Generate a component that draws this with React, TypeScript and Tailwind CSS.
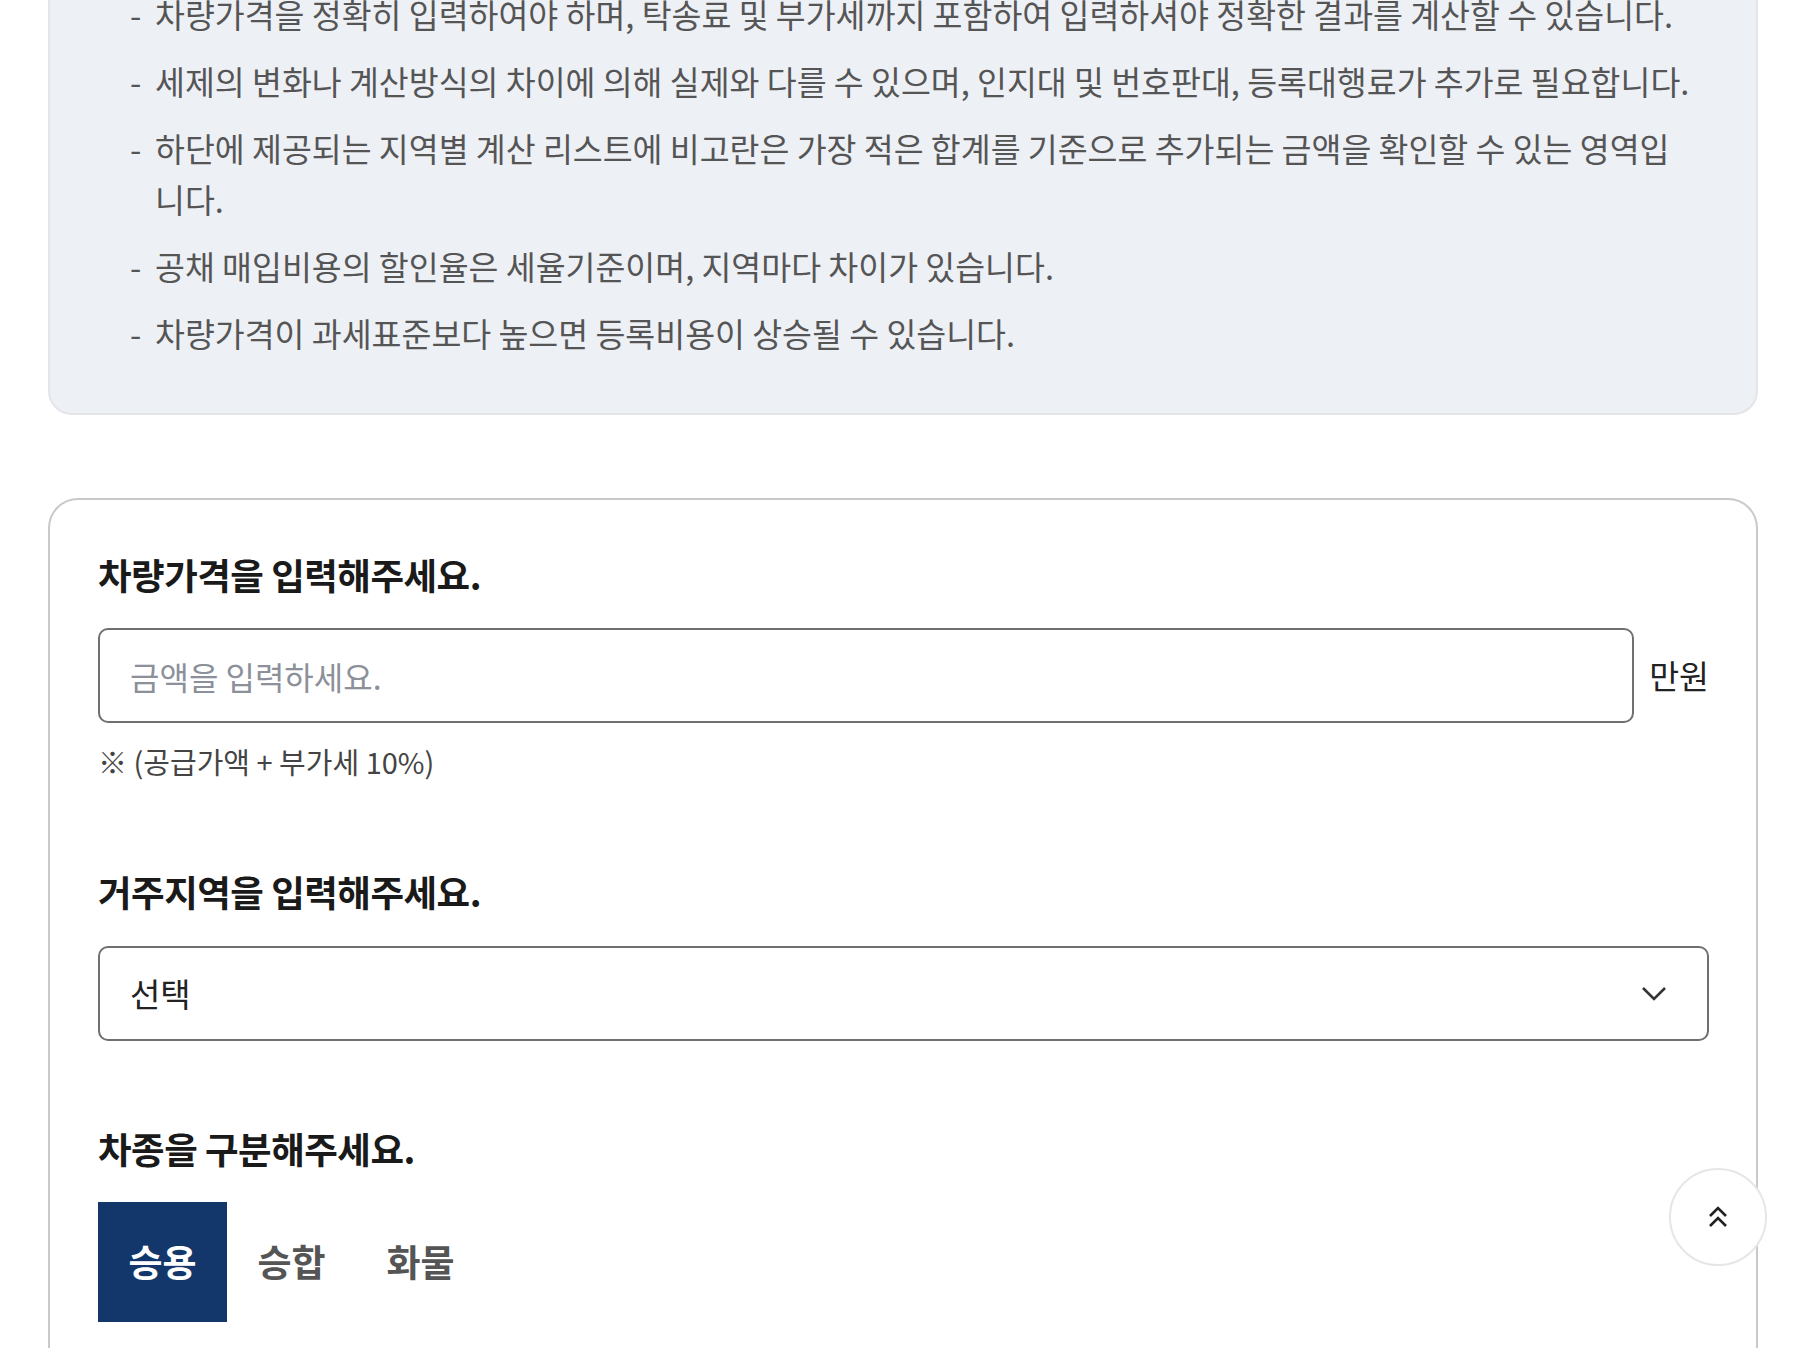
import { useState } from "react";

const notices = [
  "차량가격을 정확히 입력하여야 하며, 탁송료 및 부가세까지 포함하여 입력하셔야 정확한 결과를 계산할 수 있습니다.",
  "세제의 변화나 계산방식의 차이에 의해 실제와 다를 수 있으며, 인지대 및 번호판대, 등록대행료가 추가로 필요합니다.",
  "하단에 제공되는 지역별 계산 리스트에 비고란은 가장 적은 합계를 기준으로 추가되는 금액을 확인할 수 있는 영역입니다.",
  "공채 매입비용의 할인율은 세율기준이며, 지역마다 차이가 있습니다.",
  "차량가격이 과세표준보다 높으면 등록비용이 상승될 수 있습니다.",
];

const carTypes = ["승용", "승합", "화물"];

function SectionTitle({ children }: { children: React.ReactNode }) {
  return (
    <h3 className="text-[36.5px] leading-[46px] font-bold text-[#1a1a1a] tracking-[-0.5px]">
      {children}
    </h3>
  );
}

export default function App() {
  const [carType, setCarType] = useState("승용");

  return (
    <div
      className="h-[1348px] overflow-hidden bg-white"
      style={{ fontFamily: '"Noto Sans CJK KR", "Noto Sans", sans-serif' }}
    >
      <div className="ml-[48px] mr-[50px] mt-[-62px]">
        {/* 안내 문구 */}
        <div className="rounded-[24px] border-2 border-[#e3e5e9] bg-[#edf0f5] pl-[80px] pr-[64px] pt-[48px] pb-[55px]">
          <ul className="flex flex-col gap-[16px]">
            {notices.map((text) => (
              <li key={text} className="flex text-[32.5px] leading-[51px] text-[#555555]">
                <span className="w-[25px] shrink-0">-</span>
                <span>{text}</span>
              </li>
            ))}
          </ul>
        </div>

        {/* 계산 폼 */}
        <div className="mt-[83px] h-[1000px] rounded-[30px] border-2 border-[#c9c9c9] bg-white pl-[48px] pr-[47px] pt-[52px]">
          <SectionTitle>차량가격을 입력해주세요.</SectionTitle>
          <div className="mt-[30px] flex items-center gap-[15px]">
            <input
              type="text"
              placeholder="금액을 입력하세요."
              className="h-[95px] flex-1 rounded-[10px] border-2 border-[#707070] px-[30px] text-[32px] text-[#222] outline-none placeholder:text-[#8b9099]"
            />
            <span className="text-[32.5px] text-[#222]">만원</span>
          </div>
          <p className="mt-[19px] text-[29px] leading-[38px] text-[#444]">※ (공급가액 + 부가세 10%)</p>

          <div className="mt-[89px]">
            <SectionTitle>거주지역을 입력해주세요.</SectionTitle>
          </div>
          <button className="mt-[31px] flex h-[95px] w-full items-center justify-between rounded-[10px] border-2 border-[#707070] pl-[30px] pr-[40px] text-[33px] text-[#222]">
            <span>선택</span>
            <svg width="26" height="16" viewBox="0 0 26 16" fill="none" stroke="#333" strokeWidth="2.6">
              <path d="M2 2l11 11L24 2" />
            </svg>
          </button>

          <div className="mt-[85px]">
            <SectionTitle>차종을 구분해주세요.</SectionTitle>
          </div>
          <div className="mt-[30px] flex">
            {carTypes.map((t) => (
              <button
                key={t}
                onClick={() => setCarType(t)}
                className={
                  t === carType
                    ? "flex h-[120px] w-[129px] items-center justify-center bg-[#13376b] text-[37px] font-bold text-white"
                    : "flex h-[120px] w-[129px] items-center justify-center bg-white text-[37px] font-bold text-[#555]"
                }
              >
                {t}
              </button>
            ))}
          </div>
        </div>
      </div>

      {/* 맨 위로 */}
      <button className="fixed right-[41px] bottom-[82px] flex h-[98px] w-[98px] items-center justify-center rounded-full border-2 border-[#e6e6e6] bg-white">
        <svg width="22" height="24" viewBox="0 0 22 24" fill="none" stroke="#222" strokeWidth="2.6">
          <path d="M3 11l8-8 8 8" />
          <path d="M3 21l8-8 8 8" />
        </svg>
      </button>
    </div>
  );
}
